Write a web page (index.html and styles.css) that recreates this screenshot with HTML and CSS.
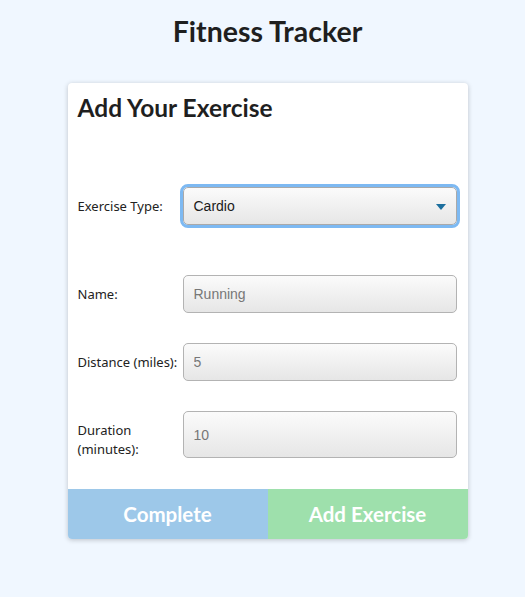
FILE: index.html
```html
<!DOCTYPE html>
<html>
<head>
<meta charset="utf-8">
<link rel="stylesheet" href="styles.css">
</head>
<body>
<h1 class="title">Fitness Tracker</h1>
<div class="card">
  <div class="card-body">
    <h2 class="card-heading">Add Your Exercise</h2>
    <div class="row row-type">
      <label class="label">Exercise Type:</label>
      <div class="select">
        <span>Cardio</span>
        <span class="arrow"></span>
      </div>
    </div>
    <div class="row row-name">
      <label class="label">Name:</label>
      <input class="field" type="text" placeholder="Running">
    </div>
    <div class="row">
      <label class="label">Distance (miles):</label>
      <input class="field" type="text" placeholder="5">
    </div>
    <div class="row row-duration">
      <label class="label">Duration (minutes):</label>
      <input class="field field-tall" type="text" placeholder="10">
    </div>
  </div>
  <div class="actions">
    <button class="btn btn-complete">Complete</button>
    <button class="btn btn-add">Add Exercise</button>
  </div>
</div>
</body>
</html>
```
FILE: styles.css
```css
html, body {
  margin: 0;
  padding: 0;
}
body {
  background: #f0f7ff;
  font-family: "Lato", "Liberation Sans", sans-serif;
  color: #222;
  height: 597px;
  padding-left: 10px;
  box-sizing: border-box;
}
.title {
  margin: 0;
  padding-top: 13px;
  height: 83px;
  box-sizing: border-box;
  text-align: center;
  font-size: 28.5px;
  line-height: 36px;
  font-weight: 700;
  color: #1f1f1f;
}
.card {
  width: 400px;
  margin: 0 auto;
  background: #fff;
  border-radius: 4px;
  box-shadow: 0 1px 5px rgba(0, 0, 0, 0.22);
  overflow: hidden;
}
.card-body {
  padding: 10px 10px 30px 10px;
}
.card-heading {
  margin: 0;
  font-size: 24.5px;
  line-height: 30px;
  font-weight: 700;
  color: #1f1f1f;
}
.row {
  display: flex;
  align-items: center;
  margin-top: 30px;
}
.row-type {
  margin-top: 64px;
}
.row-name {
  margin-top: 50px;
}
.row-duration {
  align-items: flex-start;
}
.label {
  width: 105px;
  flex: none;
  font-family: "Noto Sans", "Open Sans", sans-serif;
  font-size: 13px;
  line-height: 19px;
  color: #222;
}
.row-duration .label {
  padding-top: 10px;
  width: 95px;
  margin-right: 10px;
}
.select {
  flex: 1;
  height: 38px;
  box-sizing: border-box;
  margin-right: 1px;
  border: 1px solid #a9a9a9;
  border-radius: 5px;
  outline: 3px solid #7db9f2;
  outline-offset: 0;
  background: linear-gradient(#fbfbfb, #e6e6e6);
  display: flex;
  align-items: center;
  justify-content: space-between;
  padding: 0 10px 0 10px;
  font-family: "Liberation Sans", Arial, sans-serif;
  font-size: 14px;
  color: #1a1a1a;
}
.arrow {
  width: 0;
  height: 0;
  border-left: 5px solid transparent;
  border-right: 5px solid transparent;
  border-top: 6px solid #1c6f9e;
  margin-top: 1px;
}
.field {
  flex: 1;
  height: 38px;
  box-sizing: border-box;
  margin: 0 1px 0 0;
  border: 1px solid #b3b3b3;
  border-radius: 5px;
  background: linear-gradient(#fbfbfb, #e6e6e6);
  padding: 0 10px;
  font-family: "Liberation Sans", Arial, sans-serif;
  font-size: 14px;
  color: #777;
}
.field::placeholder {
  color: #777;
}
.field-tall {
  height: 47px;
}
.actions {
  display: flex;
  height: 50px;
}
.btn {
  flex: 1;
  border: none;
  margin: 0;
  padding: 0;
  font-family: "Lato", sans-serif;
  font-weight: 700;
  font-size: 20.5px;
  color: #fff;
}
.btn-complete {
  background: #9dc8e9;
}
.btn-add {
  background: #9ee0ac;
}
```
